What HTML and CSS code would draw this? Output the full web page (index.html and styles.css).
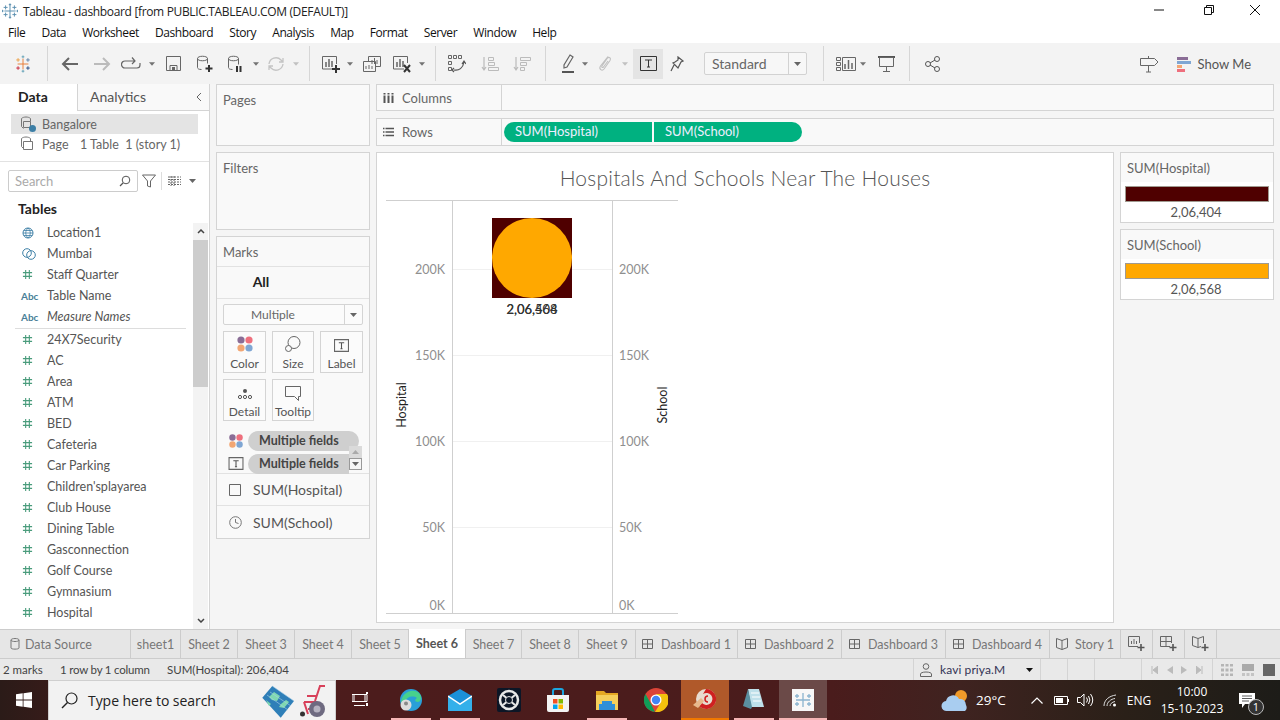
FILE: index.html
```html
<!DOCTYPE html>
<html lang="en">
<head>
  <meta charset="UTF-8">
  <title>Tableau - dashboard</title>
  <link rel="stylesheet" href="styles.css">
</head>
<body>
  <svg class="defs">
    <symbol id="num" viewBox="0 0 12 12"><path d="M4 1v10M8 1v10M1 4h10M1 8h10" fill="none" stroke="#4a9c7c" stroke-width="1.2"/></symbol>
    <symbol id="caret" viewBox="0 0 7 4"><path d="M0 0h7L3.5 4z" fill="#666"/></symbol>
    <symbol id="dash" viewBox="0 0 12 12"><path d="M.5 1.500h10v9h-10zM5.500 1.500v9M.5 6h10" fill="none" stroke="#666"/></symbol>
    <symbol id="four" viewBox="0 0 18 18"><circle cx="5" cy="5" r="3.600" fill="#8a6d96"/><circle cx="13" cy="5" r="3.600" fill="#ee6f7d"/><circle cx="5" cy="13" r="3.600" fill="#f2a673"/><circle cx="13" cy="13" r="3.600" fill="#7fa6d3"/></symbol>
    <symbol id="tbox" viewBox="0 0 14 14"><path d="M.5 1.500h13v11H.5z" fill="none" stroke="#666"/><path d="M4.500 4.500h5M7 4.500v5.500M6 10h2" fill="none" stroke="#555"/></symbol>
    <symbol id="logo" viewBox="0 0 20 20"><path d="M10 3v14M3 10h14M4.500 3v5M2 5.500h5M15.500 3v5M13 5.500h5M4.500 12v5M2 14.500h5M15.500 12v5M13 14.500h5M10 .5v3M8.500 2h3M10 16.500v3M8.500 18h3M.5 8.500v3M0 10h2M19.500 8.500v3M18 10h2" fill="none" stroke="#5b8fb0" stroke-width="1.200"/></symbol>
  </svg>

  <header class="titlebar">
    <svg class="title-logo" width="16" height="16"><use href="#logo"/></svg>
    <span class="title-text">Tableau - dashboard [from PUBLIC.TABLEAU.COM (DEFAULT)]</span>
    <div class="winctl">
      <svg width="12" height="12" viewBox="0 0 12 12"><path d="M1 6h10" stroke="#111"/></svg>
      <svg width="12" height="12" viewBox="0 0 12 12"><path d="M1.500 3.500h7v7h-7zM3.500 3.500v-2h7v7h-2" fill="none" stroke="#111"/></svg>
      <svg width="12" height="12" viewBox="0 0 12 12"><path d="M1 1l10 10M11 1L1 11" stroke="#111"/></svg>
    </div>
  </header>

  <nav class="menubar">
    <span>File</span><span>Data</span><span>Worksheet</span><span>Dashboard</span><span>Story</span><span>Analysis</span><span>Map</span><span>Format</span><span>Server</span><span>Window</span><span>Help</span>
  </nav>

  <div class="toolbar">
    <div class="tg g0">
      <svg width="18" height="18" viewBox="0 0 20 20"><path d="M10 4v12M4 10h12" stroke="#e8762d"/><path d="M4.500 3.500v4M2.500 5.500h4" stroke="#eb9d3f"/><path d="M15.500 3.500v4M13.500 5.500h4" stroke="#5b7fa6"/><path d="M4.500 12.500v4M2.500 14.500h4" stroke="#c72035"/><path d="M15.500 12.500v4M13.500 14.500h4" stroke="#1f447e"/><path d="M10 .5v3M8.500 2h3M10 16.500v3M8.500 18h3" stroke="#5f9fb5"/></svg>
    </div>
    <div class="tg g1">
      <span class="tb w36"><svg width="18" height="16" viewBox="0 0 18 16"><path d="M17 8H2M8 2L2 8l6 6" fill="none" stroke="#666" stroke-width="2"/></svg></span>
      <span class="tb w28"><svg width="18" height="16" viewBox="0 0 18 16"><path d="M1 8h15M10 2l6 6-6 6" fill="none" stroke="#bbb" stroke-width="2"/></svg></span>
      <span class="tb w30"><svg width="20" height="14" viewBox="0 0 20 14"><path d="M13 4H4a3 3 0 0 0 0 7h12a3 3 0 0 0 3-3V6M11 .5L14 4l-3 3" fill="none" stroke="#666" stroke-width="1.200"/></svg></span>
      <span class="tb w12"><svg class="cr" width="6" height="4"><use href="#caret"/></svg></span>
      <span class="tb w30"><svg width="17" height="17" viewBox="0 0 17 17"><path d="M1.500 1.500h14v14h-14zM5 15.500v-5h7v5" fill="none" stroke="#666"/><path d="M7 12h3v3H7z" fill="#666"/></svg></span>
      <span class="tb w34"><svg width="18" height="18" viewBox="0 0 18 18"><path d="M1.500 3.500c0-3 10-3 10 0v5M1.500 3.500v9c0 1 1 2 4 2M1.500 3.500c0 3 10 3 10 0" fill="none" stroke="#666"/><path d="M13 10v7M9.500 13.500h7" stroke="#333" stroke-width="2"/></svg></span>
      <span class="tb w28"><svg width="18" height="18" viewBox="0 0 18 18"><path d="M1.500 3.500c0-3 10-3 10 0v6M1.500 3.500v9c0 1 1 2 4 2M1.500 3.500c0 3 10 3 10 0" fill="none" stroke="#666"/><path d="M10 11v6M13.500 11v6" stroke="#333" stroke-width="2"/></svg></span>
      <span class="tb w12"><svg class="cr" width="6" height="4"><use href="#caret"/></svg></span>
      <span class="tb w28"><svg width="18" height="16" viewBox="0 0 18 16"><path d="M2 8a7 7 0 0 1 12-4l2 2M16 8a7 7 0 0 1-12 4l-2-2M16 2v4h-4M2 14v-4h4" fill="none" stroke="#c4c4c4" stroke-width="1.300"/></svg></span>
      <span class="tb w12"><svg class="cr dim" width="6" height="4"><use href="#caret"/></svg></span>
    </div>
    <div class="tg g2">
      <span class="tb w24"><svg width="20" height="18" viewBox="0 0 20 18"><path d="M13 14H1.500V1.500h14V9" fill="none" stroke="#666"/><path d="M5 12V7M8 12V4M11 12V6" stroke="#666" stroke-width="1.500"/><path d="M15 10v8M11 14h8" stroke="#333" stroke-width="2"/></svg></span>
      <span class="tb w14"><svg class="cr" width="6" height="4"><use href="#caret"/></svg></span>
      <span class="tb w30"><svg width="18" height="16" viewBox="0 0 18 16"><path d="M5.500 5V.5h12v10H13M.5 5.500h12v10H.5z" fill="none" stroke="#666"/><path d="M9 8V4M11.500 8V2M14 8V4M3 13v-3M6 13v-4M9 13v-3" stroke="#666"/></svg></span>
      <span class="tb w30"><svg width="20" height="18" viewBox="0 0 20 18"><path d="M12 14H1.500V1.500h14V8" fill="none" stroke="#666"/><path d="M5 12V7M8 12V4M11 12V6" stroke="#666" stroke-width="1.500"/><path d="M12 10l6 7M18 10l-6 7" stroke="#333" stroke-width="2"/></svg></span>
      <span class="tb w10"><svg class="cr" width="6" height="4"><use href="#caret"/></svg></span>
    </div>
    <div class="tg g3">
      <span class="tb w32"><svg width="18" height="18" viewBox="0 0 18 18"><path d="M.5.5h3v3h-3zM5.500.5h3v3h-3zM10.500.5h3v3h-3zM.5 6.500h3v3h-3zM.5 12.500h3v3h-3z" fill="none" stroke="#666"/><path d="M6 15c5 1 9-2 10-8M14 9l2-3 2 3M6 13l-2 2 2 2" fill="none" stroke="#555" stroke-width="1.200"/></svg></span>
      <span class="tb w34"><svg width="18" height="16" viewBox="0 0 18 16"><path d="M3 1v13M1 11l2 3 2-3" fill="none" stroke="#bbb" stroke-width="1.200"/><path d="M7.500 1.500h5v3h-5zM7.500 6.500h6v3h-6zM7.500 11.500h10v3h-10z" fill="none" stroke="#bbb"/></svg></span>
      <span class="tb w30"><svg width="18" height="16" viewBox="0 0 18 16"><path d="M3 1v13M1 11l2 3 2-3" fill="none" stroke="#bbb" stroke-width="1.200"/><path d="M7.500 1.500h10v3h-10zM7.500 6.500h6v3h-6zM7.500 11.500h4v3h-4z" fill="none" stroke="#bbb"/></svg></span>
    </div>
    <div class="tg g4">
      <span class="tb w28"><svg width="14" height="20" viewBox="0 0 14 20"><path d="M9 1l3 2-6 10-3 1v-3z" fill="none" stroke="#666" stroke-width="1.200"/><path d="M1 18h12" stroke="#555" stroke-width="2"/></svg></span>
      <span class="tb w6"><svg class="cr" width="6" height="4"><use href="#caret"/></svg></span>
      <span class="tb w34"><svg width="14" height="18" viewBox="0 0 14 18"><path d="M10 1.500L2.500 11c-2 3 1.500 5.500 3.500 3l6-8.500c1.500-2.500-1-4-2.500-2.500L4 11c-.8 1.300.5 2 1.500 1L10 6" fill="none" stroke="#c0c0c0" stroke-width="1.100"/></svg></span>
      <span class="tb w6"><svg class="cr dim" width="6" height="4"><use href="#caret"/></svg></span>
      <span class="tb w30 on"><svg width="17" height="15" viewBox="0 0 17 15"><path d="M.5.5h16v14H.5z" fill="none" stroke="#333"/><path d="M5 4h7M8.500 4v7M7 11h3" fill="none" stroke="#333"/></svg></span>
      <span class="tb w28"><svg width="14" height="16" viewBox="0 0 14 16"><path d="M8 1l5 4-2 1-2 4-1 2-5-5 2-1 3-2zM4 9l-3 6" fill="none" stroke="#555" stroke-width="1.200"/></svg></span>
      <div class="fit"><span class="fit-text">Standard</span><span class="fit-arrow"><svg width="7" height="4"><use href="#caret"/></svg></span></div>
    </div>
    <div class="tg g5">
      <span class="tb w20"><svg width="20" height="14" viewBox="0 0 20 14"><path d="M.5.5h4v3h-4zM.5 5.500h4v3h-4zM.5 10.500h4v3h-4zM6.500.5h13v13h-13z" fill="none" stroke="#666"/><path d="M9 12V7M12.500 12V3M16 12V6" stroke="#666" stroke-width="1.500"/></svg></span>
      <span class="tb w14"><svg class="cr" width="6" height="4"><use href="#caret"/></svg></span>
      <span class="tb w32"><svg width="17" height="16" viewBox="0 0 17 16"><path d="M0 1h17" stroke="#555" stroke-width="2"/><path d="M1.500 1.500h14v9h-14zM8.500 10.500v5M5 15.500h7" fill="none" stroke="#666"/></svg></span>
    </div>
    <div class="tg g6">
      <span class="tb w28"><svg width="15" height="16" viewBox="0 0 15 16"><circle cx="3" cy="8" r="2.500" fill="none" stroke="#555"/><circle cx="12" cy="3" r="2.500" fill="none" stroke="#555"/><circle cx="12" cy="13" r="2.500" fill="none" stroke="#555"/><path d="M5 7l5-3M5 9l5 3" stroke="#555"/></svg></span>
    </div>
    <div class="tools-right">
      <svg width="19" height="18" viewBox="0 0 19 18"><path d="M.5 3.500h14l3.500 3.500-3.500 3.500H.5zM8.500 1v2M8.500 10.500V17M6 17h5" fill="none" stroke="#666"/></svg>
      <div class="showme">
        <svg width="15" height="16" viewBox="0 0 15 16"><path d="M0 1h11v3H0z" fill="#8a6d96"/><path d="M0 5h14v3H0z" fill="#7fa6d3"/><path d="M0 9h5v3H0z" fill="#f2a673"/><path d="M0 13h8v3H0z" fill="#ee6f7d"/></svg>
        <span>Show Me</span>
      </div>
    </div>
  </div>

  <main class="main">
    <aside class="datapane">
      <div class="pane-tabs">
        <div class="pane-tab active">Data</div>
        <div class="pane-tab">Analytics<svg class="collapse" width="7" height="10" viewBox="0 0 7 10"><path d="M6 1L2 5l4 4" fill="none" stroke="#666"/></svg></div>
      </div>
      <div class="sources">
        <div class="source selected">
          <svg width="16" height="16" viewBox="0 0 16 16"><path d="M1.500 2.500c2-2 7-2 9 0v3M1.500 2.500v8l2 2M3.500 5.500h7v6h-7z" fill="none" stroke="#777"/><circle cx="12.500" cy="12.500" r="3.500" fill="#3d7fa6"/></svg>
          <span>Bangalore</span>
        </div>
        <div class="source">
          <svg width="16" height="16" viewBox="0 0 16 16"><path d="M1.500 2.500c2-2 7-2 9 0v3M1.500 2.500v8l2 2M3.500 5.500h9v8h-9z" fill="none" stroke="#777"/></svg>
          <span class="src-name">Page</span><span>1 Table&nbsp;&nbsp;1 (story 1)</span>
        </div>
      </div>
      <div class="search-row">
        <div class="search"><span>Search</span><svg width="12" height="12" viewBox="0 0 12 12"><circle cx="7" cy="5" r="3.800" fill="none" stroke="#555"/><path d="M4 8l-3 3" stroke="#555" stroke-width="1.300"/></svg></div>
        <svg class="funnel" width="14" height="14" viewBox="0 0 14 14"><path d="M.5 1h13L8.500 7v6l-3-1V7z" fill="none" stroke="#666"/></svg>
        <span class="search-sep"></span>
        <svg class="listicon" width="13" height="10" viewBox="0 0 13 10"><path d="M0 1h13M0 3.500h13M0 6h13M0 8.500h13M3 0v10M6 0v10" stroke="#666" stroke-dasharray="2 1"/></svg>
        <svg width="7" height="4"><use href="#caret"/></svg>
      </div>
      <h2 class="tables">Tables</h2>
      <div class="fields-wrap">
        <ul class="fields">
          <li><svg class="fi" width="12" height="12" viewBox="0 0 12 12"><circle cx="6" cy="6" r="5" fill="none" stroke="#3d7fa6"/><path d="M1 6h10M6 1c-3 3-3 7 0 10M6 1c3 3 3 7 0 10M2 3.500h8M2 8.500h8" fill="none" stroke="#3d7fa6" stroke-width=".8"/></svg>Location1</li>
          <li><svg class="fi" width="14" height="12" viewBox="0 0 14 12"><circle cx="5" cy="5" r="4.300" fill="none" stroke="#3d7fa6"/><circle cx="9" cy="7" r="4.300" fill="none" stroke="#3d7fa6"/></svg>Mumbai</li>
          <li><svg class="fi" width="11" height="11"><use href="#num"/></svg>Staff Quarter</li>
          <li><span class="abc">Abc</span>Table Name</li>
          <li class="ital"><span class="abc">Abc</span>Measure Names</li>
          <li class="rule"></li>
          <li><svg class="fi" width="11" height="11"><use href="#num"/></svg>24X7Security</li>
          <li><svg class="fi" width="11" height="11"><use href="#num"/></svg>AC</li>
          <li><svg class="fi" width="11" height="11"><use href="#num"/></svg>Area</li>
          <li><svg class="fi" width="11" height="11"><use href="#num"/></svg>ATM</li>
          <li><svg class="fi" width="11" height="11"><use href="#num"/></svg>BED</li>
          <li><svg class="fi" width="11" height="11"><use href="#num"/></svg>Cafeteria</li>
          <li><svg class="fi" width="11" height="11"><use href="#num"/></svg>Car Parking</li>
          <li><svg class="fi" width="11" height="11"><use href="#num"/></svg>Children'splayarea</li>
          <li><svg class="fi" width="11" height="11"><use href="#num"/></svg>Club House</li>
          <li><svg class="fi" width="11" height="11"><use href="#num"/></svg>Dining Table</li>
          <li><svg class="fi" width="11" height="11"><use href="#num"/></svg>Gasconnection</li>
          <li><svg class="fi" width="11" height="11"><use href="#num"/></svg>Golf Course</li>
          <li><svg class="fi" width="11" height="11"><use href="#num"/></svg>Gymnasium</li>
          <li><svg class="fi" width="11" height="11"><use href="#num"/></svg>Hospital</li>
        </ul>
        <div class="vscroll">
          <div class="vs-btn"><svg width="8" height="5" viewBox="0 0 8 5"><path d="M1 4l3-3 3 3" fill="none" stroke="#444" stroke-width="1.500"/></svg></div>
          <div class="vs-thumb"></div>
          <div class="vs-track"></div>
          <div class="vs-btn"><svg width="8" height="5" viewBox="0 0 8 5"><path d="M1 1l3 3 3-3" fill="none" stroke="#444" stroke-width="1.500"/></svg></div>
        </div>
      </div>
    </aside>

    <section class="shelves">
      <div class="card pages"><div class="card-title">Pages</div></div>
      <div class="card filters"><div class="card-title">Filters</div></div>
      <div class="card marks">
        <div class="card-title marks-title">Marks</div>
        <div class="marks-all">All</div>
        <div class="marks-body">
          <div class="marktype"><span>Multiple</span><i><svg width="7" height="4"><use href="#caret"/></svg></i></div>
          <div class="markbtns">
            <div class="markbtn"><svg width="18" height="18"><use href="#four"/></svg>Color</div>
            <div class="markbtn"><svg width="18" height="18" viewBox="0 0 18 18"><circle cx="10" cy="7.500" r="6" fill="none" stroke="#666"/><circle cx="4.500" cy="13.500" r="3" fill="#fbfbfb" stroke="#666"/></svg>Size</div>
            <div class="markbtn"><svg width="15" height="15"><use href="#tbox"/></svg>Label</div>
            <div class="markbtn"><svg width="16" height="14" viewBox="0 0 16 14"><circle cx="8" cy="4" r="2" fill="#555"/><circle cx="3" cy="10" r="1.600" fill="none" stroke="#555"/><circle cx="8" cy="10" r="1.600" fill="none" stroke="#555"/><circle cx="13" cy="10" r="1.600" fill="none" stroke="#555"/></svg>Detail</div>
            <div class="markbtn"><svg width="16" height="15" viewBox="0 0 16 15"><path d="M.5.5h15v10h-2v4l-4-4H.5z" fill="none" stroke="#666"/></svg>Tooltip</div>
          </div>
        </div>
        <div class="pills">
          <div class="pillrow"><svg width="16" height="16"><use href="#four"/></svg><span class="markpill">Multiple fields</span></div>
          <div class="pillrow"><svg width="16" height="15"><use href="#tbox"/></svg><span class="markpill cut">Multiple fields</span></div>
          <div class="pillscroll">
            <i><svg width="7" height="4" viewBox="0 0 7 4"><path d="M0 4h7L3.500 0z" fill="#aaa"/></svg></i>
            <i class="dn"><svg width="7" height="4"><use href="#caret"/></svg></i>
          </div>
        </div>
        <div class="measure"><svg width="13" height="12" viewBox="0 0 13 12"><path d="M.5.5h11v11H.5z" fill="none" stroke="#666"/></svg><span>SUM(Hospital)</span></div>
        <div class="measure"><svg width="13" height="13" viewBox="0 0 13 13"><circle cx="6.500" cy="6.500" r="5.800" fill="none" stroke="#777"/><path d="M6.500 6.500V3M6.500 6.500l3 1" stroke="#777"/></svg><span>SUM(School)</span></div>
      </div>
    </section>

    <section class="center">
      <div class="shelf columns">
        <div class="shelf-label"><svg width="11" height="10" viewBox="0 0 11 10"><path d="M1.500 0v10M5.500 0v10M9.500 0v10" stroke="#555" stroke-width="2" stroke-dasharray="1.500 1 8"/></svg>Columns</div>
      </div>
      <div class="shelf rows">
        <div class="shelf-label"><svg width="11" height="10" viewBox="0 0 11 10"><path d="M0 1.500h11M0 5h11M0 8.500h11" stroke="#555" stroke-width="1.600" stroke-dasharray="1.500 1 9"/></svg>Rows</div>
        <div class="shelf-pills">
          <span class="pill left">SUM(Hospital)</span>
          <span class="pill right">SUM(School)</span>
        </div>
      </div>
      <div class="workspace">
        <div class="chart">
          <svg viewBox="377 153 736 469" width="736" height="469">
            <text class="viz-title" x="745" y="186" text-anchor="middle">Hospitals And Schools Near The Houses</text>
            <path d="M452.500 269.500h160M452.500 355.500h160M452.500 441.500h160M452.500 527.500h160" stroke="#f0f0f0"/>
            <path d="M386 200.500h292M386 613.500h292M452.500 200v414M612.500 200v414" stroke="#cfcfcf" fill="none"/>
            <rect x="492" y="218" width="80" height="80" fill="#4f0000"/>
            <circle cx="532" cy="258" r="40" fill="#ffa800"/>
            <g class="tick" text-anchor="end">
              <text x="445" y="274">200K</text><text x="445" y="360">150K</text><text x="445" y="446">100K</text><text x="445" y="532">50K</text><text x="445" y="610">0K</text>
            </g>
            <g class="tick">
              <text x="619" y="274">200K</text><text x="619" y="360">150K</text><text x="619" y="446">100K</text><text x="619" y="532">50K</text><text x="619" y="610">0K</text>
            </g>
            <text class="axis" transform="translate(406 405) rotate(-90)" text-anchor="middle">Hospital</text>
            <text class="axis" transform="translate(667 405) rotate(-90)" text-anchor="middle">School</text>
            <g class="marklabel" text-anchor="middle">
              <text x="532" y="314">2,06,404</text><text x="532" y="314">2,06,568</text>
            </g>
          </svg>
        </div>
        <div class="legends">
          <div class="card legend">
            <div class="legend-head">SUM(Hospital)</div>
            <div class="swatch dark"></div>
            <div class="legend-val">2,06,404</div>
          </div>
          <div class="card legend">
            <div class="legend-head">SUM(School)</div>
            <div class="swatch amber"></div>
            <div class="legend-val">2,06,568</div>
          </div>
        </div>
      </div>
    </section>
  </main>

  <div class="tabs">
    <div class="tab t-src"><svg width="10" height="12" viewBox="0 0 10 12"><path d="M1 2c0-2 8-2 8 0v8c0 1.500-8 1.500-8 0zM1 2c0 2 8 2 8 0" fill="none" stroke="#777"/></svg>Data Source</div>
    <div class="tab t-first">sheet1</div>
    <div class="tab">Sheet 2</div>
    <div class="tab">Sheet 3</div>
    <div class="tab">Sheet 4</div>
    <div class="tab">Sheet 5</div>
    <div class="tab active">Sheet 6</div>
    <div class="tab t-n">Sheet 7</div>
    <div class="tab">Sheet 8</div>
    <div class="tab">Sheet 9</div>
    <div class="tab t-d1"><svg width="12" height="12"><use href="#dash"/></svg>Dashboard 1</div>
    <div class="tab t-d2"><svg width="12" height="12"><use href="#dash"/></svg>Dashboard 2</div>
    <div class="tab t-d2"><svg width="12" height="12"><use href="#dash"/></svg>Dashboard 3</div>
    <div class="tab t-d2"><svg width="12" height="12"><use href="#dash"/></svg>Dashboard 4</div>
    <div class="tab t-story"><svg width="12" height="12" viewBox="0 0 12 12"><path d="M6 2.500L.5 .5v9L6 11.500l5.500-2v-9zM6 2.500v9" fill="none" stroke="#666"/></svg>Story 1</div>
    <div class="tab t-add"><svg width="18" height="16" viewBox="0 0 18 16"><path d="M10 10.500H.5V.5h11V7" fill="none" stroke="#666"/><path d="M3.500 8V5M6 8V3M8.500 8V5" stroke="#666"/><path d="M13 8v7M9.500 11.500h7" stroke="#555" stroke-width="1.600"/></svg></div>
    <div class="tab t-add"><svg width="18" height="16" viewBox="0 0 18 16"><path d="M10 10.500H.5V.5h11V7M6 .5v10M.5 5.500h11" fill="none" stroke="#666"/><path d="M13 8v7M9.500 11.500h7" stroke="#555" stroke-width="1.600"/></svg></div>
    <div class="tab t-add"><svg width="18" height="16" viewBox="0 0 18 16"><path d="M6 2.500L.5.5v9l5.500 2 3-1M6 2.500L11.500.5V7M6 2.500v9" fill="none" stroke="#666"/><path d="M13 8v7M9.500 11.500h7" stroke="#555" stroke-width="1.600"/></svg></div>
  </div>

  <div class="statusbar">
    <span class="st st-marks">2 marks</span>
    <span class="st st-rows">1 row by 1 column</span>
    <span class="st st-sum">SUM(Hospital): 206,404</span>
    <div class="st-box st-user">
      <svg width="12" height="14" viewBox="0 0 12 14"><circle cx="6" cy="3.500" r="2.800" fill="none" stroke="#666"/><path d="M.5 13.500V11c0-1 2-2 5.500-2s5.500 1 5.500 2v2.500z" fill="none" stroke="#666"/></svg>
      <span>kavi priya.M</span>
      <svg class="user-caret" width="7" height="4" viewBox="0 0 7 4"><path d="M0 0h7L3.500 4z" fill="#111"/></svg>
    </div>
    <div class="st-box st-empty"></div>
    <div class="st-box st-empty"></div>
    <div class="st-box st-gapbox"></div>
    <div class="st-box st-nav">
      <svg width="7" height="8" viewBox="0 0 7 8"><path d="M1 0v8M7 0v8L2 4z" stroke="#bbb" fill="#bbb"/></svg>
      <svg width="6" height="8" viewBox="0 0 6 8"><path d="M6 0v8L0 4z" fill="#bbb"/></svg>
      <svg width="6" height="8" viewBox="0 0 6 8"><path d="M0 0v8l6-4z" fill="#bbb"/></svg>
      <svg width="7" height="8" viewBox="0 0 7 8"><path d="M6 0v8M0 0v8l5-4z" stroke="#bbb" fill="#bbb"/></svg>
    </div>
    <div class="st-views">
      <svg width="12" height="12" viewBox="0 0 12 12"><path d="M0 1h3M4.500 1h3M9 1h3M0 6h3M4.500 6h3M9 6h3M0 11h3M4.500 11h3M9 11h3" stroke="#b5b5b5" stroke-width="3"/></svg>
      <svg width="12" height="12" viewBox="0 0 12 12"><path d="M0 0h12v7H0z" fill="#aaa"/><path d="M0 9h3v3H0zM4.500 9h3v3h-3zM9 9h3v3H9z" fill="#c4c4c4"/></svg>
      <svg width="12" height="12" viewBox="0 0 12 12"><path d="M0 0h12v12H0z" fill="#666"/></svg>
    </div>
  </div>

  <footer class="taskbar">
    <div class="start"><svg width="16" height="16" viewBox="0 0 16 16"><path d="M0 2.300l6.700-1v6.300H0zM7.500 1.200L16 0v7.600H7.500zM0 8.400h6.700v6.300L0 13.700zM7.500 8.400H16V16l-8.500-1.200z" fill="#fff"/></svg></div>
    <div class="tasksearch">
      <svg width="17" height="17" viewBox="0 0 17 17"><circle cx="10.500" cy="6.500" r="5.500" fill="none" stroke="#222" stroke-width="1.200"/><path d="M6.500 10.500L1 16" stroke="#222" stroke-width="1.400"/></svg>
      <span>Type here to search</span>
      <svg class="bing" width="66" height="36" viewBox="0 0 66 36"><path d="M1.300 14.700L11.300 3 33 18 19.700 34.700z" fill="#2f7fb8"/><path d="M8 14l5-5 6 4-3 5-5-1zM20 21l5-4 3 2-5 6-5-1zM5 17l5 4-2 2z" fill="#7fd8b0"/><path d="M11.300 3L33 18M9 9l21 14M6 12l21 15" stroke="#a8d0ea" stroke-width=".6" fill="none"/><path d="M64 3h-5l-5 15M46 13h9M43 19h13M43 19l4 12M47 26h4" fill="none" stroke="#d8405a" stroke-width="2"/><circle cx="56" cy="26" r="8" fill="#6e6a80"/><circle cx="56" cy="26" r="3.500" fill="#b5b2c0"/><circle cx="41.500" cy="31" r="2.500" fill="#333"/></svg>
    </div>
    <div class="apps">
      <div class="app"><svg class="taskview" width="16" height="16" viewBox="0 0 16 16"><path d="M0 2.500h15v7H0zM2 13.500h11M2 2.500v7M13 2.500v7" fill="none" stroke="#fff"/><path d="M15 0v2M15 11v3" stroke="#fff" stroke-width="2"/></svg></div>
      <div class="app run wide-line"><svg width="24" height="24" viewBox="0 0 24 24"><circle cx="12" cy="12" r="11" fill="#2a9fd8"/><path d="M2 14C3 4 14 0 20 5c3 3 3 8-1 9-4 0-3-3-1-4-4-3-11-1-12 4" fill="#47d18c"/><circle cx="7" cy="17" r="5.500" fill="#ddd"/><circle cx="7" cy="15.500" r="2" fill="#888"/></svg></div>
      <div class="app run"><svg width="24" height="22" viewBox="0 0 24 22"><path d="M0 7l12-7 12 7v15H0z" fill="#1b90d8"/><path d="M0 7l12 8 12-8v15H0z" fill="#34b0ea"/><path d="M0 7l12 8 12-8-12 8" fill="none" stroke="#fff" stroke-width="1.500"/></svg></div>
      <div class="app"><svg width="24" height="24" viewBox="0 0 24 24"><rect width="24" height="24" rx="2" fill="#0c1626"/><circle cx="12" cy="12" r="9" fill="none" stroke="#e8e8e8" stroke-width="2.500"/><path d="M6 7l12 10M18 7L6 17" stroke="#e8e8e8" stroke-width="2"/><circle cx="12" cy="12" r="3.500" fill="#0c1626" stroke="#e8e8e8"/></svg></div>
      <div class="app"><svg width="24" height="24" viewBox="0 0 24 24"><path d="M1 7h22v15a2 2 0 0 1-2 2H3a2 2 0 0 1-2-2z" fill="#f3f3f3"/><path d="M7 7V3a2 2 0 0 1 2-2h6a2 2 0 0 1 2 2v4" fill="none" stroke="#1ca6df" stroke-width="2"/><path d="M7 11h4.500v4.500H7z" fill="#f25022"/><path d="M12.500 11H17v4.500h-4.500z" fill="#7fba00"/><path d="M7 16.500h4.500V21H7z" fill="#00a4ef"/><path d="M12.500 16.500H17V21h-4.500z" fill="#ffb900"/></svg></div>
      <div class="app run"><svg width="22" height="20" viewBox="0 0 22 20"><path d="M0 1h8l2 2h12v17H0z" fill="#e5a823"/><path d="M0 5h22v15H0z" fill="#f5cf5b"/><path d="M6 11h10v3h3v6H3v-6h3z" fill="#2f8fd8"/></svg></div>
      <div class="app"><svg width="24" height="24" viewBox="0 0 24 24"><circle cx="12" cy="12" r="12" fill="#db4437"/><path d="M12 6h11a12 12 0 0 1-12 18l5.500-9z" fill="#f4c20d"/><path d="M1.500 6L7 16l4 8A12 12 0 0 1 1.500 6z" fill="#0f9d58"/><circle cx="12" cy="12" r="5.500" fill="#fff"/><circle cx="12" cy="12" r="4.200" fill="#4285f4"/></svg></div>
      <div class="app active-app"><svg width="24" height="22" viewBox="0 0 24 22"><circle cx="13" cy="11" r="10" fill="#e8dcd0"/><path d="M13 1a10 10 0 1 1-7 17l3-3a6 6 0 1 0 1-9z" fill="#cf2020"/><path d="M15 8a3 3 0 1 0 0 6" fill="none" stroke="#cf2020" stroke-width="1.500"/><path d="M0 17l8-7 3 3-6 7z" fill="#e8b98c"/></svg></div>
      <div class="app run"><svg width="22" height="24" viewBox="0 0 22 24"><path d="M5 1h11l5 18H8z" fill="#bfe0ea"/><path d="M5 1L0 18l8 3 1-2z" fill="#5b8fa0"/><path d="M8 5h8M9 9h8M10 13h8" stroke="#fff"/></svg></div>
      <div class="app run current"><svg width="22" height="22" viewBox="0 0 22 22"><rect width="22" height="22" fill="#f7f7f7"/><path d="M11 4v14M4 11h14M5 5v4M3 7h4M17 5v4M15 7h4M5 13v4M3 15h4M17 13v4M15 15h4" fill="none" stroke="#8ab4cf" stroke-width="1.300"/></svg></div>
    </div>
    <div class="tray">
      <div class="tray-wx"><svg width="30" height="24" viewBox="0 0 30 24"><circle cx="20" cy="8" r="6" fill="#f09a2a"/><path d="M6 23a5 5 0 0 1-1-10 7 7 0 0 1 13-2 6 6 0 0 1 7 6 5 5 0 0 1-1 6z" fill="#a9cdf0"/></svg></div>
      <div class="tray-temp">29°C</div>
      <div class="tray-ic"><svg width="12" height="7" viewBox="0 0 12 7"><path d="M.5 6.500L6 1l5.500 5.500" fill="none" stroke="#fff" stroke-width="1.200"/></svg></div>
      <div class="tray-ic"><svg width="15" height="9" viewBox="0 0 15 9"><path d="M.5.5h13v8H.5z" fill="none" stroke="#fff"/><path d="M2 2h7v5H2z" fill="#fff"/><path d="M14 3h1v3h-1z" fill="#fff"/></svg></div>
      <div class="tray-ic"><svg width="17" height="14" viewBox="0 0 17 14"><path d="M.5 4.500h3l3.500-3.500v12l-3.500-3.500h-3zM9.500 4.500a4 4 0 0 1 0 5M11.500 3a7 7 0 0 1 0 8M13.500 1a10 10 0 0 1 0 12" fill="none" stroke="#fff"/></svg></div>
      <div class="tray-ic w26"><svg width="15" height="13" viewBox="0 0 15 13"><path d="M1 12C1 6 6 2 13 1M4 12c0-4 4-7 8-7.500M7 12c0-2 2-4 5-4.500" fill="none" stroke="#ddd"/><circle cx="11.500" cy="11" r="1.500" fill="#fff"/></svg></div>
      <div class="tray-eng">ENG</div>
      <div class="tray-clock"><span>10:00</span><span>15-10-2023</span></div>
      <div class="tray-note">
        <svg width="16" height="15" viewBox="0 0 16 15"><path d="M0 0h16v11H6l-3 4v-4H0z" fill="#fff"/><path d="M3 3h10M3 5.500h10M3 8h7" stroke="#333" stroke-width=".8"/></svg>
        <span class="badge">1</span>
      </div>
    </div>
  </footer>
</body>
</html>
```

FILE: styles.css
```css
* { box-sizing: border-box; }

html, body { height: 100%; }

body {
  margin: 0;
  width: 1280px;
  height: 720px;
  overflow: hidden;
  display: flex;
  flex-direction: column;
  background: #fff;
  color: #555;
  font-family: Lato, "Open Sans", sans-serif;
  font-size: 12.500px;
}

svg { display: block; flex: none; }
.defs { display: none; }

/* window chrome */
.titlebar {
  height: 22px;
  display: flex;
  align-items: center;
  padding-left: 2px;
  font-family: "Open Sans", sans-serif;
  font-size: 12px;
  color: #222;
}
.title-text { margin-left: 5px; letter-spacing: -.34px; }
.winctl {
  margin-left: auto;
  margin-right: 19px;
  margin-top: -2px;
  display: flex;
  gap: 34px;
  align-items: center;
}
.winctl svg:nth-child(2) { margin-left: 4px; }

.menubar {
  height: 21px;
  display: flex;
  align-items: center;
  gap: 16px;
  padding-left: 8px;
  font-family: "Open Sans", sans-serif;
  font-size: 12px;
  letter-spacing: -.4px;
  color: #111;
}

/* toolbar */
.toolbar {
  height: 41px;
  display: flex;
  align-items: center;
  background: #f3f3f3;
}
.tg {
  height: 35px;
  display: flex;
  align-items: center;
  border-right: 1px solid #d6d6d6;
}
.g0 { width: 48px; justify-content: center; padding-right: 1px; }
.g1 { width: 262px; padding-left: 4px; }
.g2 { width: 126px; padding-left: 9px; }
.g3 { width: 110px; padding-left: 5px; }
.g4 { width: 278px; padding-left: 8px; }
.g5 { width: 86px; padding-left: 12px; }
.g6 { border-right: none; padding-left: 8px; }

.tb {
  height: 30px;
  display: flex;
  align-items: center;
  justify-content: center;
}
.w6 { width: 6px; }
.w10 { width: 10px; }
.w12 { width: 12px; }
.w14 { width: 14px; }
.w20 { width: 20px; }
.w24 { width: 24px; }
.w28 { width: 28px; }
.w30 { width: 30px; }
.w32 { width: 32px; }
.w34 { width: 34px; }
.w36 { width: 36px; }
.cr { opacity: .9; }
.cr.dim { opacity: .35; }
.tb.on { background: #e4e4e4; margin-left: 5px; }

.fit {
  width: 103px;
  height: 23px;
  margin-left: 13px;
  display: flex;
  align-items: center;
  background: #f7f7f7;
  border: 1px solid #d2d2d2;
  border-radius: 2px;
  font-size: 14px;
  color: #666;
}
.fit-text { flex: 1; padding-left: 7px; }
.fit-arrow {
  width: 18px;
  height: 100%;
  display: flex;
  align-items: center;
  justify-content: center;
  border-left: 1px solid #d2d2d2;
}

.tools-right {
  margin-left: auto;
  display: flex;
  align-items: center;
  gap: 18px;
  padding-right: 29px;
}
.showme { display: flex; align-items: center; gap: 6px; font-size: 13px; color: #555; }

/* main area */
.main {
  height: 545px;
  display: flex;
  background: #f5f5f5;
}

.datapane {
  width: 210px;
  background: #fff;
  border-right: 1px solid #d4d4d4;
  display: flex;
  flex-direction: column;
}
.pane-tabs { display: flex; height: 27px; }
.pane-tab {
  flex: 1;
  display: flex;
  align-items: center;
  padding: 0 0 2px 12px;
  background: #f9f9f9;
  border-left: 1px solid #d4d4d4;
  border-bottom: 1px solid #d4d4d4;
  font-size: 14px;
  color: #555;
  position: relative;
}
.pane-tab.active {
  flex: none;
  width: 77px;
  padding-left: 18px;
  background: #fff;
  border: none;
  font-weight: 700;
  color: #222;
}
.collapse { position: absolute; right: 7px; top: 8px; }

.sources {
  height: 51px;
  padding: 3px 11px 0;
  border-bottom: 1px solid #e2e2e2;
}
.source {
  width: 187px;
  height: 20px;
  display: flex;
  align-items: center;
  gap: 6px;
  padding-left: 9px;
  font-size: 12.500px;
  color: #666;
}
.source.selected { background: #e4e4e4; }
.src-name { width: 32px; }

.search-row {
  display: flex;
  align-items: center;
  height: 22px;
  margin: 8px 0 0 8px;
}
.search {
  width: 130px;
  height: 22px;
  display: flex;
  align-items: center;
  justify-content: space-between;
  padding: 0 6px;
  border: 1px solid #ccc;
  border-radius: 2px;
  color: #aaa;
  font-size: 13px;
}
.funnel { margin-left: 4px; }
.search-sep { width: 1px; height: 18px; margin-left: 5px; background: #ddd; }
.listicon { margin: 0 8px 0 6px; }

.tables {
  margin: 8px 0 0 18px;
  height: 17px;
  line-height: 17px;
  font-size: 14px;
  font-weight: 700;
  color: #222;
}
.fields-wrap {
  flex: 1;
  min-height: 0;
  margin-top: 6px;
  display: flex;
}
.fields {
  flex: 1;
  list-style: none;
  margin: -1px 0 0;
  padding: 0 0 0 15px;
  overflow: hidden;
}
.fields li {
  height: 21px;
  position: relative;
  display: flex;
  align-items: center;
  padding-left: 32px;
  white-space: nowrap;
  color: #555;
}
.fields li.ital { font-style: italic; }
.fields li.rule {
  height: 1px;
  margin: 1px 7px 0 0;
  padding: 0;
  background: #ddd;
}
.fi { position: absolute; left: 7px; top: 5px; }
.abc {
  position: absolute;
  left: 6px;
  top: 5px;
  font-size: 10px;
  font-style: normal;
  font-weight: 700;
  color: #4a7f98;
}
.vscroll {
  width: 15px;
  margin-right: 1px;
  display: flex;
  flex-direction: column;
  background: #f3f3f3;
}
.vs-btn {
  height: 17px;
  display: flex;
  align-items: center;
  justify-content: center;
}
.vs-thumb { height: 147px; background: #cdcdcd; }
.vs-track { flex: 1; }

/* shelves */
.shelves {
  width: 154px;
  margin-left: 6px;
  display: flex;
  flex-direction: column;
  gap: 6px;
}
.card {
  background: #f9f9f9;
  border: 1px solid #d4d4d4;
}
.card-title {
  padding: 7px 0 0 6px;
  font-size: 13px;
  color: #666;
}
.pages { height: 62px; }
.filters { height: 78px; }
.marks { height: 303px; }
.marks-title {
  height: 30px;
  border-bottom: 1px solid #e2e2e2;
}
.marks-all {
  height: 32px;
  line-height: 29px;
  text-align: center;
  font-weight: 700;
  font-size: 14px;
  color: #222;
  padding-right: 64px;
  border-bottom: 1px solid #e2e2e2;
}
.marks-body { padding: 5px 6px 0; }
.marktype {
  height: 21px;
  display: flex;
  align-items: center;
  background: #fbfbfb;
  border: 1px solid #d4d4d4;
  border-radius: 2px;
  font-size: 12px;
  color: #666;
}
.marktype span { flex: 1; text-align: center; padding-right: 22px; }
.marktype i {
  width: 18px;
  height: 100%;
  display: flex;
  align-items: center;
  justify-content: center;
  border-left: 1px solid #d4d4d4;
}
.markbtns {
  display: grid;
  grid-template-columns: 43px 42px 43px;
  grid-auto-rows: 42px;
  gap: 6px;
  margin-top: 6px;
}
.markbtn {
  display: flex;
  flex-direction: column;
  align-items: center;
  justify-content: flex-end;
  gap: 3px;
  padding-bottom: 1px;
  border: 1px solid #d4d4d4;
  background: #fbfbfb;
  font-size: 12px;
  color: #555;
}
.pills {
  position: relative;
  height: 53px;
  padding-top: 8px;
  border-bottom: 1px solid #e2e2e2;
}
.pillrow {
  height: 23px;
  display: flex;
  align-items: center;
  padding-left: 11px;
  gap: 4px;
}
.markpill {
  width: 111px;
  height: 20px;
  line-height: 20px;
  padding-left: 11px;
  border-radius: 10px;
  background: #cfcfcf;
  font-size: 12.500px;
  font-weight: 700;
  color: #444;
}
.markpill.cut { border-radius: 10px 0 0 10px; width: 101px; }
.pillscroll {
  position: absolute;
  left: 132px;
  top: 25px;
  width: 13px;
  display: flex;
  flex-direction: column;
  background: #dadada;
}
.pillscroll i {
  height: 12px;
  display: flex;
  align-items: center;
  justify-content: center;
}
.pillscroll i.dn { background: #f6f6f6; border: 1px solid #999; }
.measure {
  height: 32px;
  display: flex;
  align-items: center;
  gap: 11px;
  padding-left: 12px;
  font-size: 14px;
  color: #555;
  border-bottom: 1px solid #e2e2e2;
}
.measure:last-child { border-bottom: none; }

.center {
  width: 898px;
  margin-left: 6px;
  display: flex;
  flex-direction: column;
}
.shelf {
  display: flex;
  background: #f9f9f9;
  border: 1px solid #d4d4d4;
}
.columns { height: 27px; }
.rows { height: 28px; margin-top: 7px; }
.shelf-label {
  width: 125px;
  height: 100%;
  display: flex;
  align-items: center;
  gap: 8px;
  padding-left: 6px;
  border-right: 1px solid #d4d4d4;
  font-size: 13px;
  color: #666;
}
.shelf-pills { display: flex; align-items: center; gap: 2px; padding-left: 2px; }
.pill {
  width: 148px;
  height: 20px;
  line-height: 19px;
  padding-left: 11px;
  background: #00b180;
  color: #eef;
  font-size: 13px;
}
.pill.left { border-radius: 10px 0 0 10px; }
.pill.right { border-radius: 0 10px 10px 0; }

.workspace {
  display: flex;
  gap: 6px;
  margin-top: 6px;
}
.chart {
  width: 738px;
  height: 471px;
  background: #fff;
  border: 1px solid #d4d4d4;
}
.viz-title {
  font-family: Lato, sans-serif;
  font-weight: 300;
  font-size: 21px;
  letter-spacing: .22px;
  fill: #555;
}
.tick { font-size: 12.500px; fill: #8f8f8f; }
.axis { font-size: 12.500px; fill: #222; }
.marklabel { font-size: 13px; fill: #333; }

.legends {
  width: 154px;
  display: flex;
  flex-direction: column;
  gap: 6px;
}
.legend { height: 71px; background: #fff; }
.legend-head {
  height: 29px;
  padding: 7px 0 0 6px;
  background: #f9f9f9;
  font-size: 13px;
  color: #666;
}
.swatch {
  height: 16px;
  margin: 4px 4px 0;
  border: 1px solid #a09a90;
}
.swatch.dark { background: #4f0000; }
.swatch.amber { background: #ffa800; }
.legend-val { text-align: center; margin-top: 2px; padding-right: 2px; font-size: 13px; color: #555; }

/* sheet tabs */
.tabs {
  height: 30px;
  display: flex;
  background: #e6e6e6;
  border-top: 1px solid #ccc;
  border-bottom: 1px solid #ccc;
}
.tab {
  width: 57px;
  display: flex;
  align-items: center;
  justify-content: center;
  gap: 7px;
  border-right: 1px solid #ccc;
  font-size: 12.500px;
  color: #777;
  white-space: nowrap;
}
.tab.active { background: #fff; font-weight: 700; color: #555; margin-top: -1px; }
.t-src { width: 131px; justify-content: flex-start; padding-left: 10px; gap: 5px; }
.t-first { width: 50px; }
.t-n { width: 56px; }
.t-d1 { width: 102px; }
.t-d2 { width: 104px; }
.t-story { width: 71px; }
.t-add { width: 32px; }

/* status bar */
.statusbar {
  height: 21px;
  display: flex;
  align-items: center;
  background: #e9e9e9;
  font-size: 11.500px;
  color: #444;
}
.st { white-space: nowrap; }
.st-marks { width: 60px; padding-left: 3px; }
.st-rows { width: 107px; letter-spacing: -.2px; }
.st-sum { width: 746px; }
.st-box {
  height: 100%;
  display: flex;
  align-items: center;
  border-left: 1px solid #d4d4d4;
}
.st-user { width: 127px; padding-left: 6px; gap: 8px; position: relative; font-size: 12px; letter-spacing: .1px; color: #335; }
.user-caret { position: absolute; left: 112px; top: 9px; }
.st-empty { width: 27px; }
.st-gapbox { width: 47px; }
.st-nav { width: 71px; justify-content: space-around; padding: 0 5px; }
.st-views {
  flex: 1;
  height: 100%;
  display: flex;
  align-items: center;
  gap: 9px;
  padding-left: 8px;
  border-left: 1px solid #d4d4d4;
}

/* windows taskbar */
.taskbar {
  height: 40px;
  display: flex;
  background: linear-gradient(90deg, #2b1b18 0, #4d1c1c 12%, #4a1c1c 65%, #3f2320 75%, #2a2018 88%, #1d1c18 100%);
  color: #fff;
  font-family: "Open Sans", sans-serif;
}
.start {
  width: 48px;
  display: flex;
  align-items: center;
  justify-content: center;
}
.tasksearch {
  width: 288px;
  display: flex;
  align-items: center;
  padding-left: 12px;
  gap: 10px;
  background: #f2f2f2;
  border: 1px solid #cfcfcf;
  border-bottom: none;
  color: #222;
  font-size: 14px;
  letter-spacing: -.05px;
  position: relative;
}
.bing { position: absolute; right: 8px; top: 2px; }
.apps { display: flex; gap: 1px; margin-left: 2px; }
.app {
  width: 48px;
  position: relative;
  display: flex;
  align-items: center;
  justify-content: center;
}
.taskview { margin-right: 4px; }
.app.run::after {
  content: "";
  position: absolute;
  left: 4px;
  right: 4px;
  bottom: 0;
  height: 2px;
  background: #f5b5b5;
}
.app.current { background: #6b4a48; }
.app.current::after { left: 0; right: 0; }
.active-app { background: #b0592a; border-bottom: 2px solid #f07800; }

.tray {
  margin-left: 111px;
  display: flex;
  align-items: center;
  font-size: 12px;
}
.tray-wx { width: 36px; display: flex; justify-content: center; }
.tray-temp { width: 51px; padding-left: 2px; font-size: 13.500px; }
.tray-ic { width: 24px; display: flex; justify-content: center; }
.tray-ic.w26 { width: 26px; }
.tray-eng { width: 32px; text-align: center; }
.tray-clock {
  width: 74px;
  display: flex;
  flex-direction: column;
  align-items: center;
  gap: 1px;
  font-size: 12px;
  line-height: 16px;
}
.tray-note {
  width: 36px;
  display: flex;
  justify-content: center;
  position: relative;
}
.badge {
  position: absolute;
  left: 19px;
  top: 6px;
  width: 16px;
  height: 16px;
  border-radius: 50%;
  border: 1px solid #bbb;
  background: #333;
  text-align: center;
  font-size: 11px;
  line-height: 14px;
}
```
